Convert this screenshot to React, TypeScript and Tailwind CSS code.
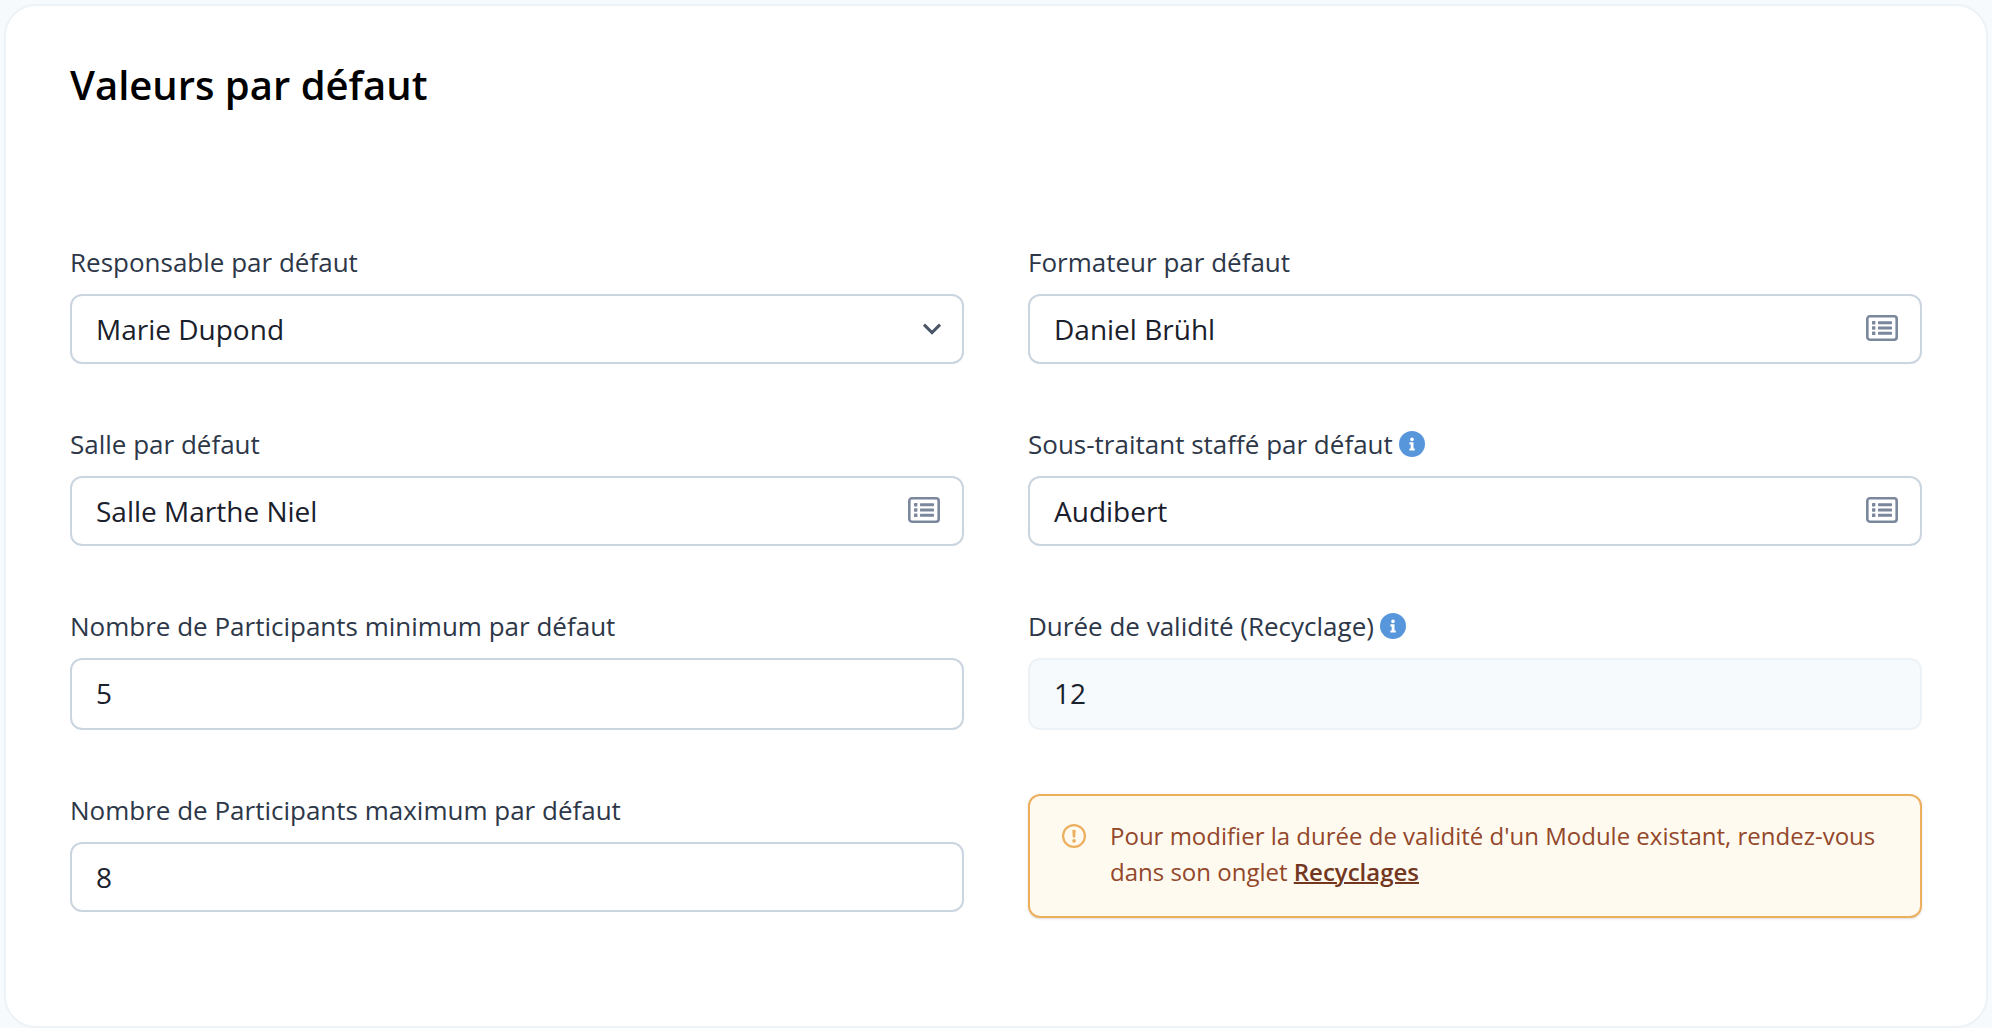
import type { ReactNode } from "react";

const FONT = "font-['Open_Sans','Noto_Sans',sans-serif]";
const BOX =
  "block w-full appearance-none rounded-xl border-2 border-[#cbd5e0] bg-white px-6 text-[28px] leading-9 text-[#1a202c] outline-none";

function InfoIcon() {
  return (
    <svg viewBox="0 0 26 26" className="size-[26px] shrink-0" role="img" aria-label="Information">
      <circle cx="13" cy="13" r="13" fill="#5896dc" />
      <circle cx="13" cy="8.4" r="1.8" fill="#fff" />
      <path d="M10.4 11.2h4.1v6.2h1.3v2.2h-5.4v-2.2h1.3v-4h-1.3z" fill="#fff" />
    </svg>
  );
}

function ListIcon() {
  return (
    <svg viewBox="0 0 32 26" className="h-[26px] w-8" fill="none" aria-hidden="true">
      <rect x="1.3" y="1.3" width="29.4" height="23.4" rx="2.6" stroke="#7b879c" strokeWidth="2.6" />
      <g fill="#7b879c">
        <rect x="6" y="6" width="3.4" height="3.4" rx="0.6" />
        <rect x="6" y="11.3" width="3.4" height="3.4" rx="0.6" />
        <rect x="6" y="16.6" width="3.4" height="3.4" rx="0.6" />
        <rect x="12" y="6.2" width="14" height="3" rx="0.6" />
        <rect x="12" y="11.5" width="14" height="3" rx="0.6" />
        <rect x="12" y="16.8" width="14" height="3" rx="0.6" />
      </g>
    </svg>
  );
}

function Field({ id, label, info, children }: { id: string; label: string; info?: boolean; children: ReactNode }) {
  return (
    <div>
      <div className="mb-3 flex items-center gap-1.5">
        <label htmlFor={id} className="text-[26px] leading-10 text-[#2d3748]">
          {label}
        </label>
        {info && <InfoIcon />}
      </div>
      {children}
    </div>
  );
}

function PickerInput({ id, value }: { id: string; value: string }) {
  return (
    <div className="relative">
      <input id={id} type="text" defaultValue={value} className={`${BOX} h-[70px] pr-20`} />
      <button type="button" aria-label="Choisir dans la liste" className="absolute inset-y-0 right-0 flex items-center pr-6 pb-0.5">
        <ListIcon />
      </button>
    </div>
  );
}

export default function App() {
  return (
    <div className={`min-h-screen bg-[#f7fafc] px-1 pt-1 ${FONT}`}>
      <section className="rounded-[32px] border-2 border-[#edf2f7] bg-white px-16 pt-14 pb-[108px]">
        <h1 className="text-[40px] leading-[46px] font-semibold text-black">Valeurs par défaut</h1>
        <form className="mt-[134px] grid grid-cols-2 items-start gap-x-16 gap-y-[60px]">
          <Field id="responsable" label="Responsable par défaut">
            <div className="relative">
              <select id="responsable" defaultValue="Marie Dupond" className={`${BOX} h-[70px] pr-16`}>
                <option>Marie Dupond</option>
              </select>
              <svg
                viewBox="0 0 20 14"
                className="pointer-events-none absolute top-7 right-[22px] h-[14px] w-5"
                fill="none"
                stroke="#4a5568"
                strokeWidth="3"
                aria-hidden="true"
              >
                <path d="M2 2.6l8 8 8-8" />
              </svg>
            </div>
          </Field>
          <Field id="formateur" label="Formateur par défaut">
            <PickerInput id="formateur" value="Daniel Brühl" />
          </Field>
          <Field id="salle" label="Salle par défaut">
            <PickerInput id="salle" value="Salle Marthe Niel" />
          </Field>
          <Field id="sous-traitant" label="Sous-traitant staffé par défaut" info>
            <PickerInput id="sous-traitant" value="Audibert" />
          </Field>
          <Field id="min" label="Nombre de Participants minimum par défaut">
            <input id="min" type="text" inputMode="numeric" defaultValue="5" className={`${BOX} h-[72px] pb-0.5`} />
          </Field>
          <Field id="validite" label="Durée de validité (Recyclage)" info>
            <input
              id="validite"
              type="text"
              disabled
              defaultValue="12"
              className="block h-[72px] w-full rounded-xl border-2 border-[#edf2f7] bg-[#f7fafc] px-6 pb-0.5 text-[28px] leading-9 text-[#1a202c]"
            />
          </Field>
          <Field id="max" label="Nombre de Participants maximum par défaut">
            <input id="max" type="text" inputMode="numeric" defaultValue="8" className={`${BOX} h-[70px]`} />
          </Field>
          <div
            role="note"
            className="mt-1 flex items-start gap-6 rounded-xl border-2 border-[#ecaf5e] bg-[#fffaf0] px-8 pt-[22px] pb-[26px] shadow-sm"
          >
            <svg viewBox="0 0 24 24" className="mt-1.5 size-6 shrink-0" fill="none" aria-hidden="true">
              <circle cx="12" cy="12" r="10.9" stroke="#ecaf5e" strokeWidth="2.2" />
              <path d="M10.3 6h3.4l-.5 7.6h-2.4z" fill="#ecaf5e" />
              <circle cx="12" cy="16.9" r="1.8" fill="#ecaf5e" />
            </svg>
            <p className="text-[24px] leading-9 text-[#93472a]">
              Pour modifier la durée de validité d'un Module existant, rendez-vous dans son onglet{" "}
              <a href="#recyclages" className="font-semibold text-[#73371f] underline decoration-2">
                Recyclages
              </a>
            </p>
          </div>
        </form>
      </section>
    </div>
  );
}
